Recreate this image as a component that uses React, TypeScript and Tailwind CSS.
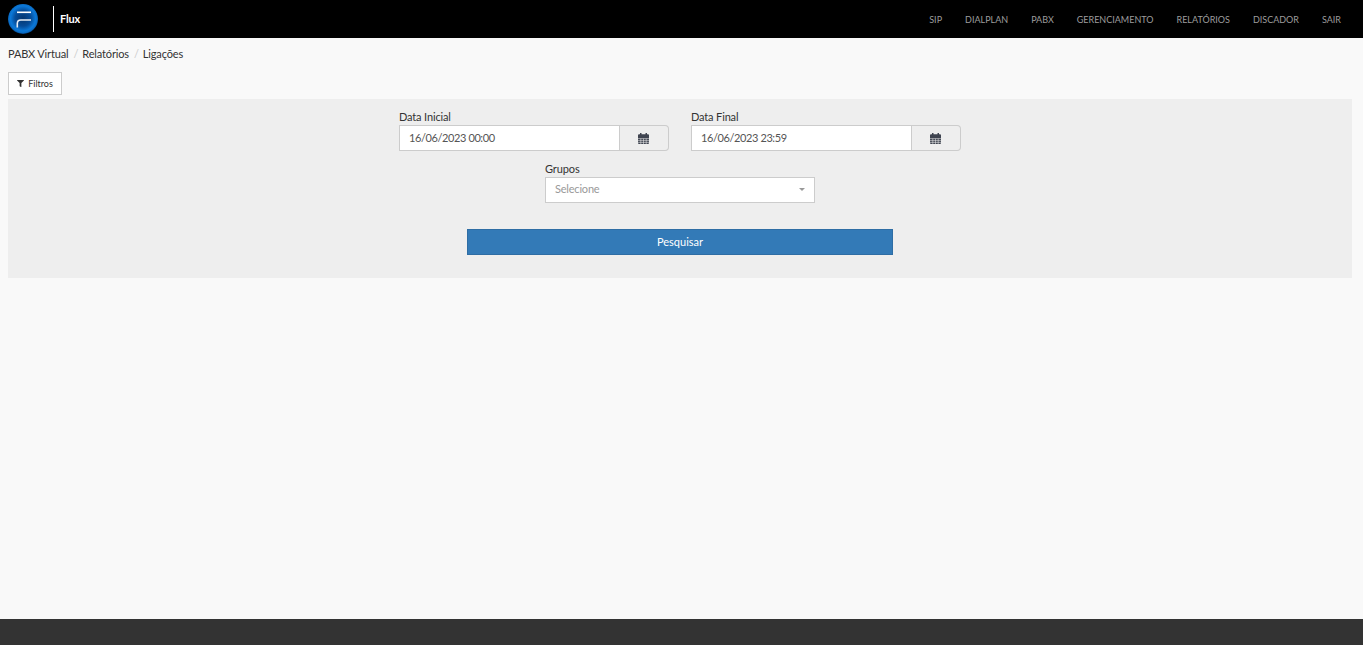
import { FaFilter } from 'react-icons/fa';

const navItems = ['SIP', 'DIALPLAN', 'PABX', 'GERENCIAMENTO', 'RELATÓRIOS', 'DISCADOR', 'SAIR'];

const Logo = () => (
  <svg width="30" height="30" viewBox="0 0 30 30" className="shrink-0">
    <defs>
      <radialGradient id="logoBall" cx="50%" cy="48%" r="52%">
        <stop offset="0%" stopColor="#05366f" />
        <stop offset="50%" stopColor="#064c98" />
        <stop offset="80%" stopColor="#0b78d8" />
        <stop offset="92%" stopColor="#0a6cc4" />
        <stop offset="100%" stopColor="#063f7c" />
      </radialGradient>
    </defs>
    <circle cx="15" cy="15" r="15" fill="url(#logoBall)" />
    <path d="M9 8.3H23" stroke="#fff" strokeWidth="1.6" fill="none" />
    <path d="M9.3 23.5V19.5Q9.3 16 12.8 16H23" stroke="#e8eef5" strokeWidth="1.6" fill="none" />
  </svg>
);

const CalendarIcon = () => (
  <svg width="11" height="11" viewBox="0 0 11 11" fill="currentColor">
    <path d="M2 0h1.5v1.2h4V0H9v1.2h1a1 1 0 0 1 1 1V10a1 1 0 0 1-1 1H1a1 1 0 0 1-1-1V2.2a1 1 0 0 1 1-1h1z" />
    <path d="M0 5.6h11M0 7.6h11M0 9.4h11M2.8 5.6V11M5.5 5.6V11M8.2 5.6V11" stroke="#eee" strokeWidth="0.55" fill="none" />
  </svg>
);

const DateField = ({ label, value }: { label: string; value: string }) => (
  <div className="w-[270px]">
    <label className="block text-[11px] leading-[14px] h-[14px] tracking-[-0.15px] text-[#333]">{label}</label>
    <div className="flex h-[26px] mt-[1px]">
      <div className="flex-1 flex items-center bg-white border border-[#ccc] pl-[9px] text-[11px] tracking-[-0.4px] text-[#555]">{value}</div>
      <div className="w-[49px] flex items-center justify-center bg-[#eee] border border-l-0 border-[#ccc] rounded-r-[4px] pr-[1px] text-[#3f4450]">
        <CalendarIcon />
      </div>
    </div>
  </div>
);

export default function App() {
  return (
    <div className="min-h-[645px] flex flex-col bg-[#f9f9f9] text-[#333] font-['Lato','Open_Sans',sans-serif]">
      <header className="h-[38px] bg-black flex items-center justify-between pl-2 pr-[22px]">
        <div className="flex items-center">
          <Logo />
          <div className="w-px h-[26px] bg-white ml-[15px]" />
          <span className="ml-[6px] text-[11px] font-bold tracking-[-0.2px] text-white">Flux</span>
        </div>
        <nav className="flex gap-[23px] pt-[1px] text-[9px] text-[#9d9d9d]">
          {navItems.map((item) => (
            <a key={item}>{item}</a>
          ))}
        </nav>
      </header>

      <main className="flex-1 px-2 pr-[11px]">
        <div className="flex items-center h-[17px] mt-2 text-[11px] tracking-[-0.15px] text-[#333]">
          <span>PABX Virtual</span>
          <span className="text-[#ccc] ml-[5px] mr-[4px]">/</span>
          <span>Relatórios</span>
          <span className="text-[#ccc] ml-[5px] mr-[4px]">/</span>
          <span>Ligações</span>
        </div>

        <button className="flex items-center justify-center gap-[4px] w-[54px] h-[23px] mt-[9px] bg-white border border-[#ccc] text-[9px] text-[#333]">
          <FaFilter className="text-[7px]" />
          Filtros
        </button>

        <section className="h-[179px] mt-[4px] bg-[#eee] flex flex-col items-center pt-[11px]">
          <div className="flex gap-[22px]">
            <DateField label="Data Inicial" value="16/06/2023 00:00" />
            <DateField label="Data Final" value="16/06/2023 23:59" />
          </div>
          <div className="w-[270px] mt-[11px]">
            <label className="block text-[11px] leading-[14px] h-[14px] tracking-[-0.1px] text-[#333]">Grupos</label>
            <div className="flex items-center justify-between h-[26px] mt-[1px] bg-white border border-[#ccc] pl-[9px] pr-[9px] pb-[1px] text-[11px] tracking-[-0.2px] text-[#999]">
              Selecione
              <span className="w-0 h-0 border-x-[3px] border-x-transparent border-t-[3px] border-t-[#999]" />
            </div>
          </div>
          <button className="w-[426px] h-[26px] mt-[26px] bg-[#337ab7] border border-[#2e6da4] text-white text-[11px]">
            Pesquisar
          </button>
        </section>
      </main>

      <footer className="h-[26px] bg-[#333]" />
    </div>
  );
}
